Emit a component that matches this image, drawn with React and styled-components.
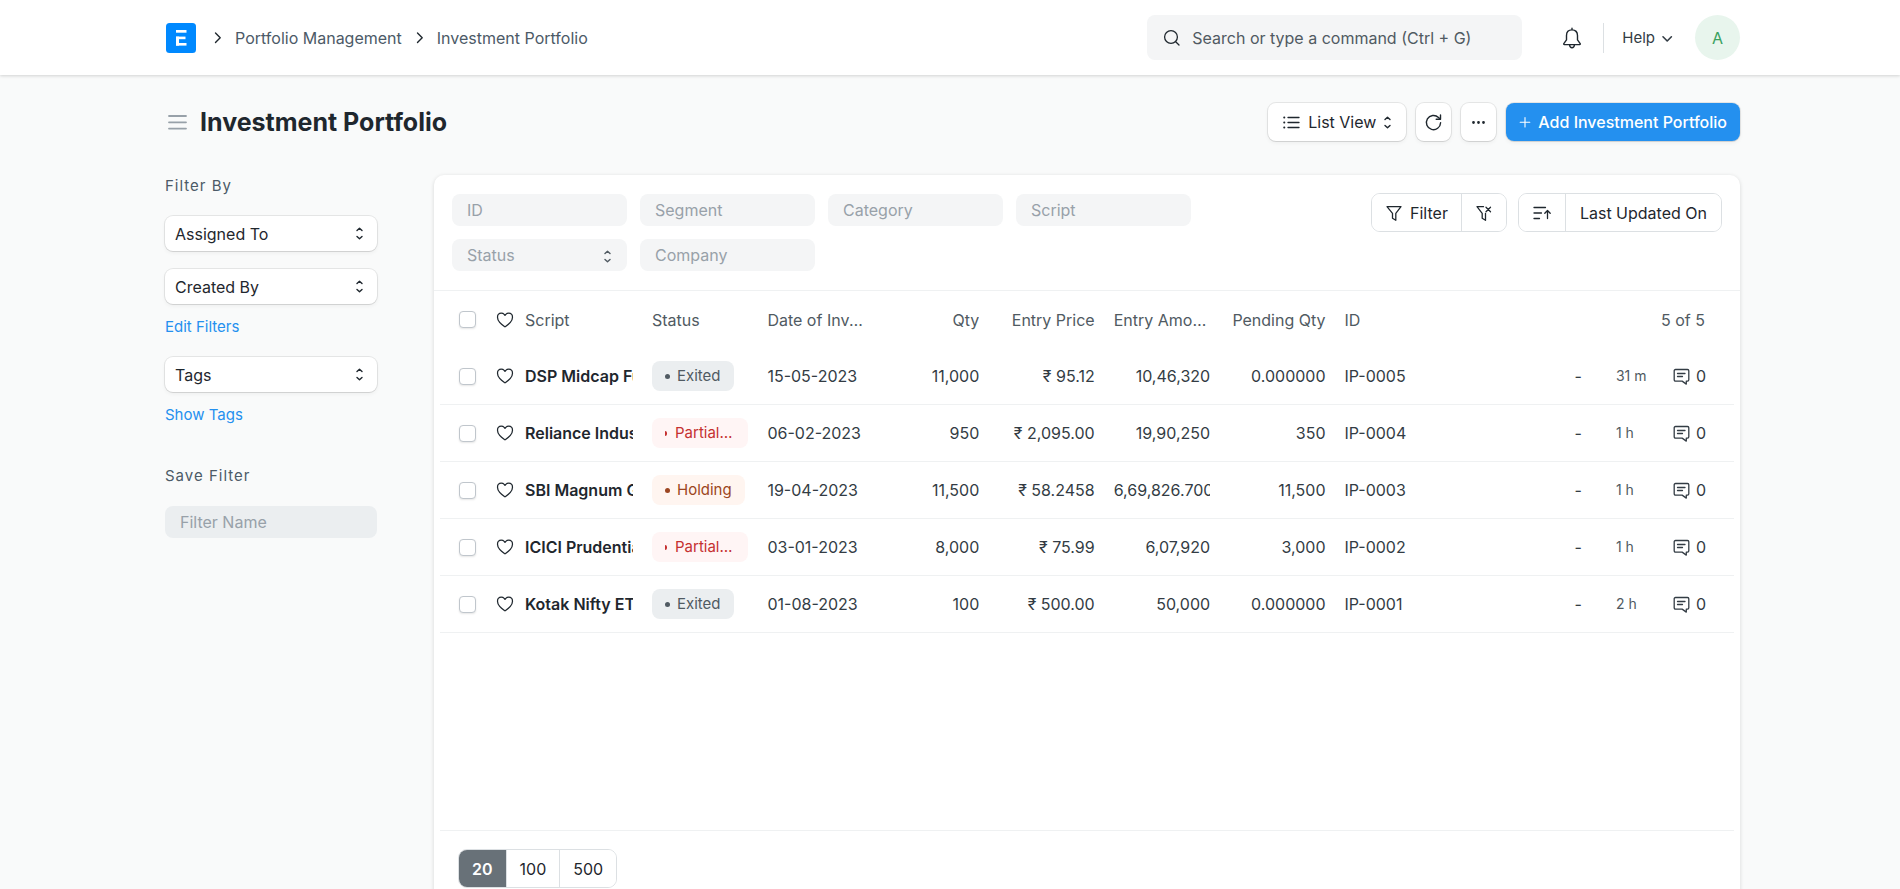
// src/App.jsx
import React from 'react';
import styled, { createGlobalStyle, css } from 'styled-components';

const GlobalStyle = createGlobalStyle`
  *,
  *::before,
  *::after {
    box-sizing: border-box;
  }

  body {
    margin: 0;
    background: #f9fafa;
    color: #1f272e;
    font-family: 'Inter', sans-serif;
    font-size: 16px;
    line-height: 24px;
  }

  button,
  input,
  select {
    margin: 0;
    font: inherit;
    color: inherit;
  }

  button {
    cursor: pointer;
  }
`;

const raised = css`
  border: none;
  background: #fff;
  box-shadow: 0 1px 0 0 rgba(0, 0, 0, 0.05), 0 0 0 1px rgba(0, 0, 0, 0.08),
    0 2px 4px 0 rgba(0, 0, 0, 0.05);
`;

const Shell = styled.div`
  height: 100vh;
  overflow-y: auto;
  scrollbar-width: none;
`;

const Container = styled.div`
  max-width: 1590px;
  margin: 0 auto;
  padding: 0 5px 0 10px;
`;

/* navbar */

const Navbar = styled.header`
  background: #fff;
  box-shadow: 0 1px 3px rgba(0, 0, 0, 0.16);
`;

const NavInner = styled(Container)`
  display: flex;
  align-items: center;
  justify-content: space-between;
  height: 75px;
`;

const Breadcrumbs = styled.nav`
  display: flex;
  align-items: center;
  gap: 9px;
  padding-left: 1px;
`;

const Crumb = styled.a`
  color: #4c5a67;
  text-decoration: none;
`;

const LogoLink = styled.a`
  display: flex;
  margin-right: 4px;
`;

const NavRight = styled.div`
  display: flex;
  align-items: center;
`;

const SearchBox = styled.label`
  display: flex;
  align-items: center;
  gap: 11px;
  width: 375px;
  height: 45px;
  margin-right: 40px;
  padding: 0 16px;
  border-radius: 8px;
  background: #f4f5f6;
`;

const SearchInput = styled.input`
  flex: 1;
  min-width: 0;
  padding: 0;
  border: none;
  outline: none;
  background: transparent;

  &::placeholder {
    color: #505a62;
    opacity: 1;
  }
`;

const PlainButton = styled.button`
  display: flex;
  align-items: center;
  gap: 4px;
  padding: 0;
  border: none;
  background: transparent;
  color: #333c44;
  font-size: ${(props) => (props.$small ? '15px' : '16px')};
`;

const NavDivider = styled.span`
  width: 1px;
  height: 30px;
  margin: 0 18px 0 21px;
  background: #dce0e3;
`;

const Avatar = styled.button`
  width: 45px;
  height: 45px;
  margin-left: 20px;
  padding: 0;
  border: none;
  border-radius: 50%;
  background: #e8f5ed;
  color: #38a160;
`;

/* page head */

const PageHead = styled.div`
  display: flex;
  align-items: center;
  justify-content: space-between;
  padding: 28px 0 34px;
`;

const TitleArea = styled.div`
  display: flex;
  align-items: center;
  gap: 13px;
  padding-left: 3px;
`;

const Title = styled.h1`
  margin: 0;
  font-size: 25px;
  font-weight: 700;
  line-height: 38px;
`;

const Actions = styled.div`
  display: flex;
  gap: 10px;
`;

const ActionButton = styled.button`
  ${raised}
  display: flex;
  align-items: center;
  justify-content: center;
  gap: 8px;
  height: 38px;
  min-width: 35px;
  padding: 0 ${(props) => (props.$icon ? '0' : '15px')};
  border-radius: 8px;
`;

const PrimaryButton = styled(ActionButton)`
  gap: 7px;
  padding: 0 13px;
  background: #2490ef;
  color: #fff;
  font-weight: 500;
`;

/* sidebar */

const Layout = styled.div`
  display: grid;
  grid-template-columns: 212px minmax(0, 1fr);
  column-gap: 57px;
`;

const Sidebar = styled.aside`
  display: flex;
  flex-direction: column;
`;

const SidebarLabel = styled.h2`
  margin: 0 0 19px;
  color: #4c5a67;
  font-size: 15px;
  font-weight: 400;
  letter-spacing: 1px;
  line-height: 22px;
`;

const SidebarGroup = styled.section`
  display: flex;
  flex-direction: column;
  gap: 18px;
`;

const GroupButton = styled.button`
  ${raised}
  display: flex;
  align-items: center;
  justify-content: space-between;
  height: 35px;
  padding: 0 14px 0 10px;
  border-radius: 8px;
`;

const SidebarLink = styled.a`
  margin: 13px 0 20px;
  color: #2490ef;
  font-size: 15px;
  line-height: 20px;
  text-decoration: none;
`;

const SaveFilter = styled.section`
  display: flex;
  flex-direction: column;
  margin-top: 20px;
`;

/* list card */

const Card = styled.main`
  min-height: 750px;
  padding-bottom: 20px;
  border-radius: 10px;
  background: #fff;
  box-shadow: 0 1px 4px rgba(0, 0, 0, 0.14);
`;

const FilterBar = styled.div`
  display: flex;
  align-items: flex-start;
  justify-content: space-between;
  padding: 18px 18px 19px;
  border-bottom: 1px solid #eff1f2;
`;

const StandardFilters = styled.div`
  display: grid;
  grid-template-columns: repeat(4, 175px);
  gap: 13px;
  padding-top: 1px;
`;

const TextInput = styled.input`
  width: 100%;
  height: 32px;
  padding: 0 15px;
  border: none;
  border-radius: 8px;
  outline: none;
  background: ${(props) => (props.$dark ? '#ebeef0' : '#f4f5f6')};

  &::placeholder {
    color: #98a1a9;
    opacity: 1;
  }
`;

const SelectWrap = styled.div`
  position: relative;

  svg {
    position: absolute;
    top: 11px;
    right: 16px;
    color: #505a62;
    pointer-events: none;
  }
`;

const Select = styled.select`
  width: 100%;
  height: 32px;
  padding: 0 15px;
  border: none;
  border-radius: 8px;
  outline: none;
  appearance: none;
  background: #f4f5f6;
  color: #98a1a9;
`;

const Selectors = styled.div`
  display: flex;
  gap: 11px;
`;

const ButtonGroup = styled.div`
  display: inline-flex;
  height: 39px;
  overflow: hidden;
  border: 1px solid #dce0e3;
  border-radius: 9px;
`;

const GroupItem = styled.button`
  display: flex;
  align-items: center;
  gap: 7px;
  padding: 0 ${(props) => (props.$wide ? '14px' : '13px')};
  border: none;
  background: ${(props) => (props.$active ? '#687178' : '#fff')};
  color: ${(props) => (props.$active ? '#fff' : '#1f272e')};
  font-weight: ${(props) => (props.$active ? 600 : 400)};

  & + & {
    border-left: 1px solid #dce0e3;
  }
`;

const ListArea = styled.div`
  min-height: 540px;
  margin: 0 6px;
  border-bottom: 1px solid #eff1f2;
`;

const Table = styled.table`
  width: 100%;
  border-collapse: separate;
  border-spacing: 0;
  table-layout: fixed;
`;

const Col = styled.col`
  width: ${(props) => (props.$width ? `${props.$width}px` : 'auto')};
`;

const cell = css`
  height: 57px;
  padding: 0 19px 0 0;
  text-align: ${(props) => (props.$right ? 'right' : 'left')};
  vertical-align: middle;
  white-space: nowrap;
`;

const HeadCell = styled.th`
  ${cell}
  color: #505a62;
  font-weight: 400;
`;

const Cell = styled.td`
  ${cell}
  border-bottom: 1px solid #eff1f2;
  color: #333c44;
`;

const CheckHead = styled(HeadCell)`
  padding: 0 0 0 19px;
`;

const CheckCell = styled(Cell)`
  padding: 0 0 0 19px;
`;

const HeartHead = styled(HeadCell)`
  padding: 0;
`;

const HeartCell = styled(Cell)`
  padding: 0;
`;

const CountHead = styled(HeadCell)`
  padding-right: 29px;
`;

const DashCell = styled(Cell)`
  padding-right: 34px;
`;

const TimeCell = styled(Cell)`
  padding: 0;
  color: #505a62;
  font-size: 14px;
`;

const CommentCell = styled(Cell)`
  padding: 0;
`;

const Clip = styled.div`
  overflow: hidden;
  color: ${(props) => (props.$bold ? '#1f272e' : 'inherit')};
  font-weight: ${(props) => (props.$bold ? 600 : 400)};
  text-overflow: ${(props) => (props.$ellipsis ? 'ellipsis' : 'clip')};
`;

const Checkbox = styled.input`
  display: block;
  width: 17px;
  height: 17px;
  margin: 0;
  border: 1px solid #c0c6cc;
  border-radius: 4px;
  appearance: none;
  background: #fff;
  box-shadow: 0 1px 2px rgba(0, 0, 0, 0.1);
`;

const tones = {
  gray: { background: '#ebeef0', color: '#505a62' },
  red: { background: '#fff5f5', color: '#c53030' },
  orange: { background: '#fff5f0', color: '#9c4621' },
};

const Pill = styled.span`
  display: inline-flex;
  align-items: center;
  gap: ${(props) => (props.$tight ? '8px' : '7px')};
  max-width: 100%;
  height: 30px;
  padding: 0 ${(props) => (props.$tight ? '14px' : '13px')} 0 13px;
  border-radius: 8px;
  background: ${(props) => tones[props.$tone].background};
  color: ${(props) => tones[props.$tone].color};
  font-size: 15px;
  vertical-align: middle;
`;

const Dot = styled.i`
  flex: none;
  width: ${(props) => (props.$tight ? '2px' : '5px')};
  height: 5px;
  border-radius: ${(props) => (props.$tight ? '0 3px 3px 0' : '50%')};
  background: currentColor;
`;

const PillText = styled.span`
  overflow: hidden;
  text-overflow: ellipsis;
`;

const Comments = styled.span`
  display: flex;
  align-items: center;
  gap: 6px;
`;

const Paging = styled.div`
  padding: 18px 24px 0;
`;

/* icons */

const Icon = styled.svg`
  display: block;
  flex: none;
  fill: none;
  stroke: currentColor;
  stroke-linecap: round;
  stroke-linejoin: round;
`;

const SelectIcon = () => (
  <Icon width="7" height="13" viewBox="0 0 7 13" strokeWidth="1.4">
    <path d="M1 3.5 3.5 1.2 6 3.5M1 9.5l2.5 2.3L6 9.5" />
  </Icon>
);

const ChevronRight = () => (
  <Icon width="17" height="17" viewBox="0 0 17 17" strokeWidth="1.4">
    <path d="m6.5 4 4.7 4.7-4.7 4.7" />
  </Icon>
);

const Logo = () => (
  <svg width="30" height="30" viewBox="0 0 30 30" aria-hidden="true">
    <rect width="30" height="30" rx="3.5" fill="#0089ff" />
    <rect x="10" y="7" width="10.5" height="2.7" fill="#fff" />
    <rect x="10" y="13.6" width="9.5" height="2.6" fill="#fff" />
    <rect x="10" y="20" width="10.5" height="2.6" fill="#fff" />
    <rect x="10" y="13.6" width="3" height="9" fill="#fff" />
  </svg>
);

const SearchIcon = () => (
  <Icon width="18" height="18" viewBox="0 0 18 18" strokeWidth="1.3">
    <circle cx="8" cy="8" r="6.4" />
    <path d="m12.7 12.7 3.3 3.3" />
  </Icon>
);

const BellIcon = () => (
  <Icon width="20" height="22" viewBox="0 0 20 22" strokeWidth="1.4" color="#1f272e">
    <path d="M10 2.9C6.6 2.9 4.5 5.3 4.5 8.6v4.3l-2.7 3.7c-.3.5 0 1 .5 1h15.4c.5 0 .8-.5.5-1l-2.7-3.7V8.6c0-3.300-2.100-5.700-5.500-5.700zM10 2.900V1.200M7.500 17.800c.3 1.900 1.300 2.900 2.500 2.900s2.200-1 2.500-2.900" />
  </Icon>
);

const ChevronDown = () => (
  <Icon width="16" height="16" viewBox="0 0 16 16" strokeWidth="1.6">
    <path d="m4 6.8 4.2 4.2 4.2-4.2" />
  </Icon>
);

const MenuIcon = () => (
  <Icon width="19" height="17" viewBox="0 0 19 17" strokeWidth="1.8" color="#98a1a9">
    <path d="M1 2h17M1 8.300h17M1 14.600h17" />
  </Icon>
);

const ListIcon = () => (
  <Icon width="17" height="15" viewBox="0 0 17 15" strokeWidth="1.3">
    <path d="M5 2.500h11M5 7.500h11M5 12.500h11" />
    <path d="M1.200 2.500h.1M1.200 7.500h.1M1.200 12.500h.1" strokeWidth="2" />
  </Icon>
);

const RefreshIcon = () => (
  <Icon width="19" height="19" viewBox="0 0 19 19" strokeWidth="1.4">
    <path d="M16.600 9.800a7.100 7.100 0 1 1-2.100-5.300l1.600 1.600" />
    <path d="M16.500 2v4.300h-4.300" />
  </Icon>
);

const DotsIcon = () => (
  <Icon width="15" height="5" viewBox="0 0 15 5" strokeWidth="2.8">
    <path d="M2.500 2.500h.01M7.500 2.500h.01M12.500 2.500h.01" />
  </Icon>
);

const PlusIcon = () => (
  <Icon width="12" height="12" viewBox="0 0 12 12" strokeWidth="1.1">
    <path d="M6 1.500v9.500M1.200 6.200h9.600" />
  </Icon>
);

const FilterIcon = () => (
  <Icon width="18" height="18" viewBox="0 0 18 18" strokeWidth="1.3">
    <path d="M2 2.700h14l-5.200 6.600v7l-3.300-2.100V9.300z" />
  </Icon>
);

const FilterClearIcon = () => (
  <Icon width="18" height="18" viewBox="0 0 18 18" strokeWidth="1.3">
    <path d="M8.500 2.700H2l5.200 6.600v4.900l3.300 2.100v-7" />
    <path d="m11 3.200 4.500 4.500M15.500 3.200 11 7.700" />
  </Icon>
);

const SortIcon = () => (
  <Icon width="18" height="16" viewBox="0 0 18 16" strokeWidth="1.3">
    <path d="M1 2.500h11.500M1 8h7.500M1 13.500h5.500M14.500 13.500V5.800M11.800 8.200l2.700-2.700 2.700 2.700" />
  </Icon>
);

const HeartIcon = () => (
  <Icon width="20" height="20" viewBox="0 0 16 16" strokeWidth="1" color="#1f272e">
    <path d="M7.606 3.799 8 4.302l.394-.503.106-.14c.048-.065.08-.108.129-.159a3.284 3.284 0 0 1 4.720 0c.424.434.655 1.245.65 2.278-.006 1.578-.685 2.931-1.728 4.159-1.050 1.234-2.439 2.308-3.814 3.328a.763.763 0 0 1-.914 0c-1.375-1.020-2.764-2.094-3.814-3.328C2.686 8.709 2.007 7.357 2 5.778c-.004-1.033.227-1.844.651-2.278a3.284 3.284 0 0 1 4.720 0c.05.05.081.094.129.158.028.038.061.083.106.14z" />
  </Icon>
);

const CommentIcon = () => (
  <Icon width="17" height="17" viewBox="0 0 17 17" strokeWidth="1.3">
    <path d="M2.500 1.500h12c.8 0 1.300.5 1.300 1.300v9c0 .8-.5 1.300-1.300 1.300h-1.200v3l-4.200-3H2.500c-.8 0-1.300-.5-1.300-1.300v-9c0-.8.5-1.300 1.300-1.300zM4.500 5.500h7.500M4.500 8.500h5" />
  </Icon>
);

const columns = [
  { label: 'Status' },
  { label: 'Date of Investment' },
  { label: 'Qty', right: true },
  { label: 'Entry Price', right: true },
  { label: 'Entry Amount', right: true },
  { label: 'Pending Qty', right: true },
  { label: 'ID' },
];

const rows = [
  {
    script: 'DSP Midcap Fund',
    status: 'Exited',
    tone: 'gray',
    date: '15-05-2023',
    numbers: ['11,000', '₹ 95.12', '10,46,320', '0.000000'],
    id: 'IP-0005',
    age: '31 m',
  },
  {
    script: 'Reliance Industries',
    status: 'Partially Exited',
    tone: 'red',
    date: '06-02-2023',
    numbers: ['950', '₹ 2,095.00', '19,90,250', '350'],
    id: 'IP-0004',
    age: '1 h',
  },
  {
    script: 'SBI Magnum Gilt Fund',
    status: 'Holding',
    tone: 'orange',
    date: '19-04-2023',
    numbers: ['11,500', '₹ 58.2458', '6,69,826.700000', '11,500'],
    id: 'IP-0003',
    age: '1 h',
  },
  {
    script: 'ICICI Prudential',
    status: 'Partially Exited',
    tone: 'red',
    date: '03-01-2023',
    numbers: ['8,000', '₹ 75.99', '6,07,920', '3,000'],
    id: 'IP-0002',
    age: '1 h',
  },
  {
    script: 'Kotak Nifty ETF',
    status: 'Exited',
    tone: 'gray',
    date: '01-08-2023',
    numbers: ['100', '₹ 500.00', '50,000', '0.000000'],
    id: 'IP-0001',
    age: '2 h',
  },
];

const StatusPill = ({ status, tone }) => {
  const tight = tone === 'red';
  return (
    <Pill $tone={tone} $tight={tight}>
      <Dot $tight={tight} />
      <PillText>{status}</PillText>
    </Pill>
  );
};

const Header = () => (
  <Navbar>
    <NavInner>
      <Breadcrumbs aria-label="Breadcrumb">
        <LogoLink href="#home" aria-label="Home">
          <Logo />
        </LogoLink>
        <ChevronRight />
        <Crumb href="#portfolio-management">Portfolio Management</Crumb>
        <ChevronRight />
        <Crumb href="#investment-portfolio">Investment Portfolio</Crumb>
      </Breadcrumbs>
      <NavRight>
        <SearchBox>
          <SearchIcon />
          <SearchInput
            type="text"
            aria-label="Search"
            placeholder="Search or type a command (Ctrl + G)"
          />
        </SearchBox>
        <PlainButton aria-label="Notifications">
          <BellIcon />
        </PlainButton>
        <NavDivider />
        <PlainButton $small>
          Help
          <ChevronDown />
        </PlainButton>
        <Avatar>A</Avatar>
      </NavRight>
    </NavInner>
  </Navbar>
);

const Filters = () => (
  <Sidebar>
    <SidebarLabel>Filter By</SidebarLabel>
    <SidebarGroup>
      <GroupButton>
        Assigned To
        <SelectIcon />
      </GroupButton>
      <GroupButton>
        Created By
        <SelectIcon />
      </GroupButton>
    </SidebarGroup>
    <SidebarLink href="#edit-filters">Edit Filters</SidebarLink>
    <GroupButton>
      Tags
      <SelectIcon />
    </GroupButton>
    <SidebarLink href="#show-tags">Show Tags</SidebarLink>
    <SaveFilter>
      <SidebarLabel>Save Filter</SidebarLabel>
      <TextInput $dark type="text" aria-label="Filter Name" placeholder="Filter Name" />
    </SaveFilter>
  </Sidebar>
);

const ListTable = () => (
  <Table>
    <colgroup>
      <Col $width={55} />
      <Col $width={30} />
      <Col $width={127} />
      {columns.map((column) => (
        <Col key={column.label} />
      ))}
      <Col $width={156} />
      <Col $width={57} />
      <Col $width={61} />
    </colgroup>
    <thead>
      <tr>
        <CheckHead>
          <Checkbox type="checkbox" aria-label="Select all" />
        </CheckHead>
        <HeartHead>
          <HeartIcon />
        </HeartHead>
        <HeadCell>Script</HeadCell>
        {columns.map((column) => (
          <HeadCell key={column.label} $right={column.right}>
            <Clip $ellipsis>{column.label}</Clip>
          </HeadCell>
        ))}
        <CountHead colSpan={3} $right>
          5 of 5
        </CountHead>
      </tr>
    </thead>
    <tbody>
      {rows.map((row) => (
        <tr key={row.id}>
          <CheckCell>
            <Checkbox type="checkbox" aria-label={`Select ${row.id}`} />
          </CheckCell>
          <HeartCell>
            <HeartIcon />
          </HeartCell>
          <Cell>
            <Clip $bold>{row.script}</Clip>
          </Cell>
          <Cell>
            <StatusPill status={row.status} tone={row.tone} />
          </Cell>
          <Cell>{row.date}</Cell>
          {row.numbers.map((value, index) => (
            <Cell key={columns[index + 2].label} $right>
              <Clip>{value}</Clip>
            </Cell>
          ))}
          <Cell>{row.id}</Cell>
          <DashCell $right>-</DashCell>
          <TimeCell>{row.age}</TimeCell>
          <CommentCell>
            <Comments>
              <CommentIcon />0
            </Comments>
          </CommentCell>
        </tr>
      ))}
    </tbody>
  </Table>
);

const App = () => {
  return (
    <>
      <GlobalStyle />
      <Shell>
        <Header />
        <Container>
          <PageHead>
            <TitleArea>
              <PlainButton aria-label="Toggle sidebar">
                <MenuIcon />
              </PlainButton>
              <Title>Investment Portfolio</Title>
            </TitleArea>
            <Actions>
              <ActionButton>
                <ListIcon />
                List View
                <SelectIcon />
              </ActionButton>
              <ActionButton $icon aria-label="Refresh">
                <RefreshIcon />
              </ActionButton>
              <ActionButton $icon aria-label="Menu">
                <DotsIcon />
              </ActionButton>
              <PrimaryButton>
                <PlusIcon />
                Add Investment Portfolio
              </PrimaryButton>
            </Actions>
          </PageHead>
          <Layout>
            <Filters />
            <Card>
              <FilterBar>
                <StandardFilters>
                  <TextInput type="text" aria-label="ID" placeholder="ID" />
                  <TextInput type="text" aria-label="Segment" placeholder="Segment" />
                  <TextInput type="text" aria-label="Category" placeholder="Category" />
                  <TextInput type="text" aria-label="Script" placeholder="Script" />
                  <SelectWrap>
                    <Select aria-label="Status">
                      <option>Status</option>
                    </Select>
                    <SelectIcon />
                  </SelectWrap>
                  <TextInput type="text" aria-label="Company" placeholder="Company" />
                </StandardFilters>
                <Selectors>
                  <ButtonGroup>
                    <GroupItem>
                      <FilterIcon />
                      Filter
                    </GroupItem>
                    <GroupItem aria-label="Clear filters">
                      <FilterClearIcon />
                    </GroupItem>
                  </ButtonGroup>
                  <ButtonGroup>
                    <GroupItem $wide aria-label="Sort direction">
                      <SortIcon />
                    </GroupItem>
                    <GroupItem $wide>Last Updated On</GroupItem>
                  </ButtonGroup>
                </Selectors>
              </FilterBar>
              <ListArea>
                <ListTable />
              </ListArea>
              <Paging>
                <ButtonGroup>
                  <GroupItem $active>20</GroupItem>
                  <GroupItem>100</GroupItem>
                  <GroupItem>500</GroupItem>
                </ButtonGroup>
              </Paging>
            </Card>
          </Layout>
        </Container>
      </Shell>
    </>
  );
};

export default App;
